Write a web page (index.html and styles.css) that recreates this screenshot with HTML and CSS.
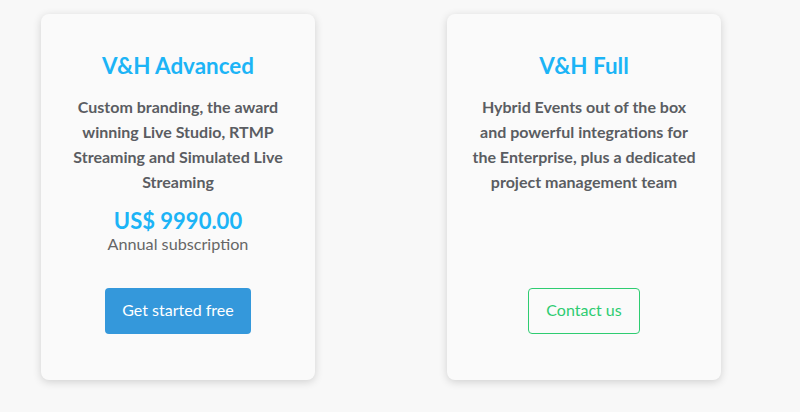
FILE: index.html
```html
<!DOCTYPE html>
<html lang="en">
<head>
<meta charset="utf-8">
<title>Plans</title>
<link rel="stylesheet" href="styles.css">
</head>
<body>
<main class="plans">
  <section class="card">
    <h2 class="card-title">V&amp;H Advanced</h2>
    <p class="card-desc">Custom branding, the award winning Live Studio, RTMP Streaming and Simulated Live Streaming</p>
    <div class="price">US$ 9990.00</div>
    <div class="price-note">Annual subscription</div>
    <a class="btn btn-primary" href="#">Get started free</a>
  </section>
  <section class="card">
    <h2 class="card-title">V&amp;H Full</h2>
    <p class="card-desc">Hybrid Events out of the box and powerful integrations for the Enterprise, plus a dedicated project management team</p>
    <a class="btn btn-outline" href="#">Contact us</a>
  </section>
</main>
</body>
</html>
```
FILE: styles.css
```css
html, body {
  margin: 0;
  padding: 0;
}
body {
  background: #f8f8f8;
  font-family: Lato, "Open Sans", sans-serif;
  width: 800px;
  height: 412px;
  overflow: hidden;
}
.plans {
  display: flex;
  gap: 132px;
  padding: 14px 0 0 41px;
}
.card {
  box-sizing: border-box;
  width: 274px;
  height: 366px;
  background: #fafafa;
  border-radius: 8px;
  box-shadow: 0 2px 9px rgba(0, 0, 0, 0.16);
  display: flex;
  flex-direction: column;
  align-items: center;
  text-align: center;
  padding: 37px 22px 46px;
}
.card-title {
  margin: 0;
  font-size: 22.4px;
  line-height: 30px;
  font-weight: 700;
  color: #1cb4f6;
}
.card-desc {
  margin: 13px 0 0;
  font-size: 16px;
  line-height: 25px;
  font-weight: 700;
  color: #5a5d62;
}
.price {
  margin-top: 14px;
  font-size: 22px;
  line-height: 26px;
  font-weight: 700;
  color: #1cb4f6;
}
.price-note {
  font-size: 16.2px;
  line-height: 20px;
  color: #666;
}
.btn {
  margin-top: auto;
  box-sizing: border-box;
  height: 46px;
  padding: 0 17px 3px;
  display: flex;
  align-items: center;
  border-radius: 4px;
  font-size: 16px;
  text-decoration: none;
}
.btn-primary {
  background: #3498db;
  color: #fff;
}
.btn-outline {
  border: 1px solid #2ecc71;
  color: #2ecc71;
}
```
